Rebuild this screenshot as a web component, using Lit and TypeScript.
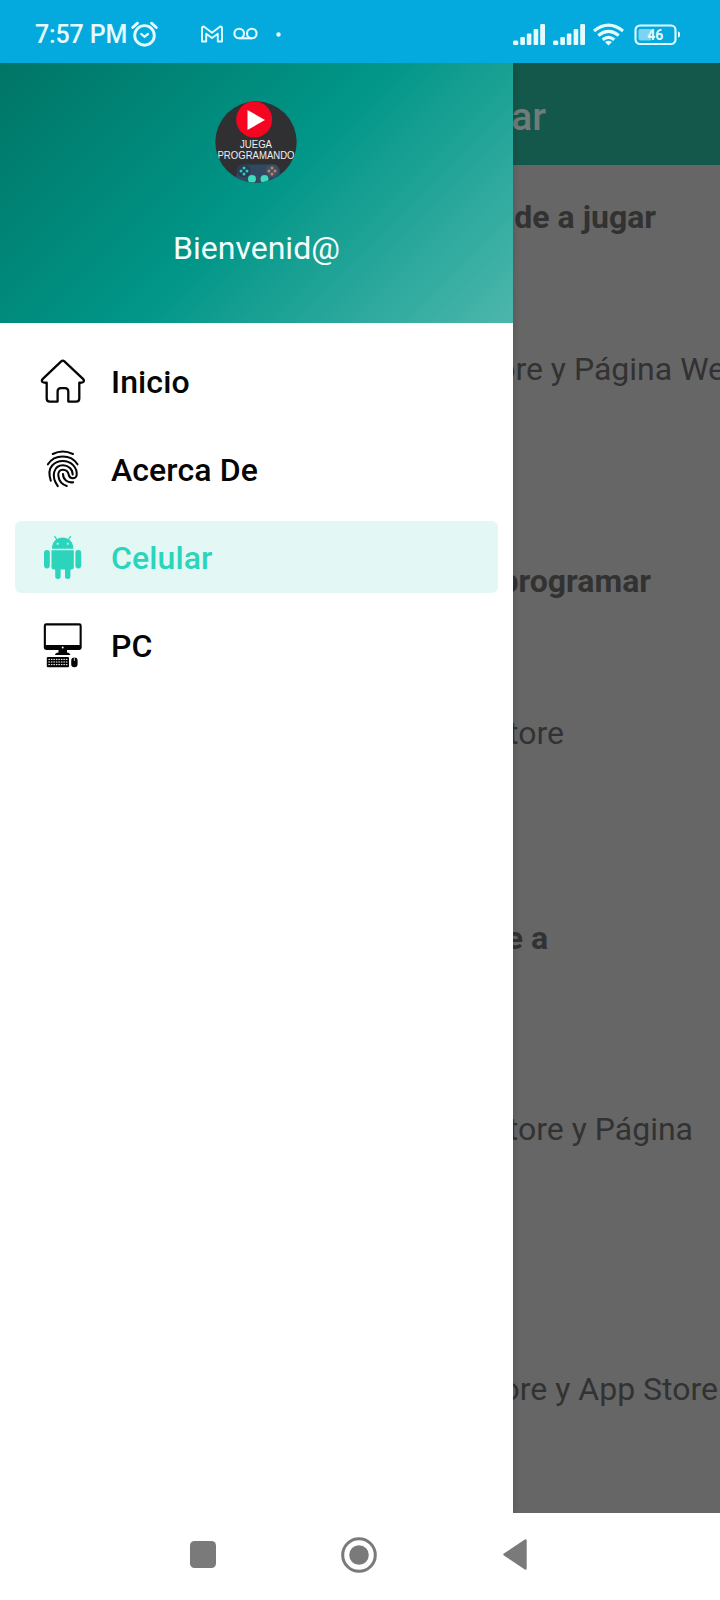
import { LitElement, html, css, svg } from "lit";
import { customElement } from "lit/decorators.js";

const home = svg`<path d="M22.2 4.3 Q23.8 2.9 25.4 4.3 L44 21.800 Q45.600 23.600 44.300 25 Q43.400 25.900 40.300 25.700 V41.500 Q40.300 44.600 37.200 44.600 H29.300 V34.500 Q29.300 31.100 25.900 31.100 H22 Q18.600 31.100 18.600 34.500 V44.600 H10.800 Q7.700 44.600 7.700 41.500 V25.700 Q4.400 25.900 3.500 25 Q2.200 23.600 3.800 21.800 Z" fill="none" stroke="currentColor" stroke-width="2.300" stroke-linejoin="round"/>`;

const fingerprint = svg`<g fill="none" stroke="currentColor" stroke-width="2.050" stroke-linecap="round">
  <path d="M13.800 9 Q23.800 4 33.900 9"/>
  <path d="M8.900 19.300 C15.500 8.800 32 8.800 38.500 19.300"/>
  <path d="M11.800 35.800 C9.600 29 9.900 24 13.200 20.500 C18.800 14.600 28.800 14.600 34.300 20.400 C37.200 23.500 38 27 37.700 30 C37.200 34.300 30.600 34.400 29.800 30 C29.300 27 27.300 24.700 23.800 24.700 C20.500 24.700 18.900 27.500 19.300 30.700 C20 36.500 23 39.600 27.800 41"/>
  <path d="M18.800 41.200 C15.500 36.500 14.100 31 15.200 27 C16.600 22.500 20 20.300 24 20.300 C29 20.300 33.600 24 33.700 29.600"/>
  <path d="M24 29 C24 34.500 28.500 38.200 34.200 37.200"/>
</g>`;

const android = svg`<g fill="currentColor">
  <path d="M13 15.700 C13 10.500 15.300 7.600 18 6 H29.300 C32 7.600 34.300 10.500 34.300 15.700 Z"/>
  <path d="M15.800 3.600 L18.500 7.500 M31.500 3.600 L28.800 7.500" stroke="currentColor" stroke-width="1.300" stroke-linecap="round"/>
  <path d="M17 6.800 Q23.700 2.300 30.300 6.800 Z"/>
  <path d="M12.500 17.300 H34.800 V34 Q34.800 36.500 32.300 36.500 H31.400 V43.500 Q31.400 46 28.700 46 Q26 46 26 43.500 V36.500 H21.600 V43.500 Q21.600 46 18.900 46 Q16.200 46 16.200 43.500 V36.500 H15 Q12.500 36.500 12.500 34 Z"/>
  <rect x="5" y="17" width="5.800" height="18.400" rx="2.800"/>
  <rect x="36.400" y="17" width="5.800" height="18.400" rx="2.800"/>
  <circle cx="18.600" cy="10.700" r="1" fill="#e3f8f5"/><circle cx="28.700" cy="10.700" r="1" fill="#e3f8f5"/>
</g>`;

const computer = svg`<g fill="currentColor">
  <path fill-rule="evenodd" d="M7.200 2.300 H40.300 Q42.700 2.300 42.700 4.700 V26.600 Q42.700 29 40.300 29 H7.200 Q4.800 29 4.800 26.600 V4.700 Q4.800 2.300 7.200 2.300 Z M6.900 4.400 V24 H40.600 V4.400 Z"/>
  <circle cx="23.700" cy="26.400" r="1" fill="#fff"/>
  <path d="M19.500 29 H28 V31.500 Q31.300 32 31.300 34 H16 Q16 32 19.500 31.500 Z"/>
  <rect x="7.800" y="35.900" width="22.200" height="10.300" rx="1"/>
  <path d="M9.400 38.400 H28.600 M9.400 41 H28.600 M9.400 43.600 H28.600" stroke="#fff" stroke-width="1" stroke-dasharray="1.500 1"/>
  <rect x="32.200" y="36.500" width="6.400" height="9.700" rx="3.200"/>
  <path d="M35.400 36.500 V40" stroke="#fff" stroke-width=".7"/>
</g>`;

const bars = html`<svg class="signal" width="32" height="22" viewBox="0 0 32 22">
  <g fill="currentColor">
    <rect x="0" y="16.500" width="5.300" height="4.500" rx="1.500"/><rect x="7.300" y="13" width="4.600" height="8" rx="1"/>
    <rect x="13.800" y="9.500" width="4.600" height="11.500" rx="1"/><rect x="20.600" y="5" width="4.600" height="16" rx="1"/>
    <rect x="27.200" y="0" width="4.800" height="21" rx="1"/>
  </g></svg>`;

@customElement("status-bar")
class StatusBar extends LitElement {
  static styles = css`
    :host { display: flex; align-items: center; box-sizing: border-box; height: 63px; padding: 6px 39px 0 35px;
      background: #04aade; color: #e4fbff; font: 500 25px/30px Roboto, sans-serif; }
    svg { display: block; flex: none; overflow: visible; }
    .time { width: 95px; white-space: nowrap; letter-spacing: -.15px; }
    .gmail { margin-left: 43px; }
    .voice { margin-left: 10px; }
    .dot { margin-left: 18px; }
    .right { display: flex; align-items: center; gap: 8px; margin-left: auto; }
    .battery { margin-left: 2px; }
    .level { font: 700 14px Roboto, sans-serif; }
  `;
  render() {
    return html`
      <span class="time">7:57 PM</span>
      <svg width="28" height="26" viewBox="0 0 28 26" fill="none" stroke="currentColor" stroke-width="2.900" stroke-linecap="round">
        <circle cx="14.500" cy="13.400" r="9.800"/><path d="M2.700 5.500 L7.500 1.200 M21.500 1.200 L26.300 5.500"/><path d="M11.300 12 L14.500 14.800 L18 12" stroke-width="2.300"/>
      </svg>
      <svg class="gmail" width="22" height="17" viewBox="0 0 22 17" fill="none" stroke="currentColor" stroke-width="1.900" stroke-linejoin="round">
        <path d="M1 15.500 V2.100 Q1 .5 2.800 .5 L11 6.800 L19.200 .5 Q21 .5 21 2.100 V15.500 H16.800 V7.800 L11 12 L5.200 7.800 V15.500 Z"/>
      </svg>
      <svg class="voice" width="25" height="13" viewBox="0 0 25 13" fill="none" stroke="currentColor" stroke-width="2.100">
        <circle cx="6.200" cy="5.500" r="4.800"/><circle cx="18.800" cy="5.500" r="4.800"/><path d="M6.200 10.300 H18.800"/>
      </svg>
      <svg class="dot" width="5" height="5"><circle cx="2.500" cy="2.500" r="2.200" fill="currentColor"/></svg>
      <div class="right">
        ${bars}${bars}
        <svg width="31" height="22" viewBox="0 0 31 22" fill="none" stroke="currentColor" stroke-width="3.100">
          <path d="M1 7 Q15.500 -4.900 30 7"/><path d="M5.300 11.500 Q15.500 3.300 25.700 11.500"/><path d="M9.700 15.700 Q15.500 10.900 21.300 15.700"/>
          <path d="M12 18 Q15.500 15.300 19 18 L15.500 21.500 Z" fill="currentColor" stroke="none"/>
        </svg>
        <svg class="battery" width="47" height="20" viewBox="0 0 47 20">
          <rect x="1.500" y=".5" width="40" height="18.500" rx="4.500" fill="none" stroke="currentColor" stroke-width="2.100"/>
          <path d="M6.500 4 H17 V15.500 H6.500 Q4.500 15.500 4.500 13.500 V6 Q4.500 4 6.500 4 Z" fill="#7dd3f2"/>
          <path d="M44 6.500 Q46 6.500 46 8.500 V10.500 Q46 12.500 44 12.500 Z" fill="currentColor"/>
          <text class="level" x="21.300" y="14.800" text-anchor="middle" fill="currentColor">46</text>
        </svg>
      </div>`;
  }
}

@customElement("nav-drawer")
class NavDrawer extends LitElement {
  static styles = css`
    :host { display: block; background: #fff; font-family: Roboto, sans-serif; }
    svg { display: block; flex: none; }
    .header { display: flex; flex-direction: column; align-items: center; box-sizing: border-box; height: 260px; padding-top: 38px;
      background: linear-gradient(135deg, #007566 0%, #009688 50%, #4db6ac 100%); }
    .avatar { margin-right: 1px; }
    .logo { font: 10.700px "Liberation Sans", Arial, sans-serif; }
    .hello { margin-top: 45px; font-size: 32px; line-height: 40px; color: #f2fffd; }
    .menu { display: flex; flex-direction: column; gap: 16px; padding: 22px 15px; }
    .item { display: flex; align-items: center; gap: 24px; height: 72px; padding-left: 24px; border-radius: 6px;
      color: #050505; font-size: 32px; font-weight: 500; letter-spacing: .1px; }
    .label { padding-top: 2px; }
    .active { color: #2bd4bb; background: #e3f8f5; }
  `;
  private items = [
    { label: "Inicio", icon: home },
    { label: "Acerca De", icon: fingerprint },
    { label: "Celular", icon: android, active: true },
    { label: "PC", icon: computer },
  ];
  render() {
    return html`
      <div class="header">
        <svg class="avatar" width="82" height="82" viewBox="0 0 82 82">
          <defs><clipPath id="round"><circle cx="41" cy="41" r="40.700"/></clipPath></defs>
          <g clip-path="url(#round)">
            <rect width="82" height="82" fill="#303033"/>
            <circle cx="39.200" cy="18.500" r="18" fill="#f5051f"/>
            <path d="M32.500 9 L50 19 L32.500 29 Z" fill="#fff"/>
            <text class="logo" x="41" y="46.800" text-anchor="middle" textLength="32" lengthAdjust="spacingAndGlyphs" fill="#eee">JUEGA</text>
            <text class="logo" x="41" y="58" text-anchor="middle" textLength="77" lengthAdjust="spacingAndGlyphs" fill="#eee">PROGRAMANDO</text>
            <path d="M28 63.500 H59 Q65 63.500 65 71.500 L67 84 H20 L22 71.500 Q22 63.500 28 63.500 Z" fill="#304860"/>
            <circle cx="29" cy="70" r="6.500" fill="#273c51"/><circle cx="57" cy="70" r="6.500" fill="#3f5063"/>
            <g fill="#37c8c4"><circle cx="29" cy="67" r="1.500"/><circle cx="29" cy="73" r="1.500"/><circle cx="26" cy="70" r="1.500"/><circle cx="32" cy="70" r="1.500"/></g>
            <g fill="#c1826b"><circle cx="57" cy="67" r="1.500"/><circle cx="57" cy="73" r="1.500"/><circle cx="54" cy="70" r="1.500"/><circle cx="60" cy="70" r="1.500"/></g>
            <circle cx="37" cy="78" r="4" fill="#3edbc0"/><circle cx="49.500" cy="78" r="4" fill="#3edbc0"/>
          </g>
        </svg>
        <div class="hello">Bienvenid@</div>
      </div>
      <nav class="menu">
        ${this.items.map(i => html`<div class="item ${i.active ? "active" : ""}">
          <svg width="48" height="48" viewBox="0 0 48 48">${i.icon}</svg><span class="label">${i.label}</span></div>`)}
      </nav>`;
  }
}

@customElement("dimmed-page")
class DimmedPage extends LitElement {
  static styles = css`
    :host { display: flex; flex-direction: column; min-width: 0; overflow: hidden; background: #666; color: #323232;
      font: 32px/40px Roboto, sans-serif; }
    .toolbar { display: flex; flex: none; justify-content: flex-end; box-sizing: border-box; height: 102px; padding: 34px 174px 0 0;
      background: #14574b; color: #737b79; font-size: 39px; font-weight: 500; }
    .row { display: flex; flex: none; justify-content: flex-end; height: 40px; white-space: nowrap; }
    .bold { font-weight: 700; font-size: 32px; }
    .a { margin: 32px 64px 0 0; }
    .b { margin: 112px -5px 0 0; }
    .c { margin: 172px 69px 0 0; }
    .d { margin: 112px 156px 0 0; }
    .e { margin: 165px 172px 0 0; }
    .f { margin: 151px 27px 0 0; }
    .g { margin: 220px 2px 0 0; }
  `;
  render() {
    return html`
      <div class="toolbar">ar</div>
      <div class="row bold a"><span>de a jugar</span></div>
      <div class="row b"><span>ore y Página We</span></div>
      <div class="row bold c"><span>programar</span></div>
      <div class="row d"><span>tore</span></div>
      <div class="row bold e"><span>e a</span></div>
      <div class="row f"><span>tore y Página</span></div>
      <div class="row g"><span>ore y App Store</span></div>`;
  }
}

@customElement("app-root")
class AppRoot extends LitElement {
  static styles = css`
    :host { display: flex; flex-direction: column; width: 720px; height: 1600px; overflow: hidden; background: #fff; }
    .main { display: grid; grid-template-columns: 513px 207px; height: 1450px; overflow: hidden; }
    .drawer { z-index: 1; box-shadow: 0 0 8px rgba(0, 0, 0, .18); }
    .system { display: flex; align-items: center; height: 87px; padding: 0 193px 4px 190px; box-sizing: border-box; justify-content: space-between; }
    .home { margin-right: 2px; }
  `;
  render() {
    return html`
      <status-bar></status-bar>
      <div class="main"><nav-drawer class="drawer"></nav-drawer><dimmed-page></dimmed-page></div>
      <div class="system">
        <svg width="26" height="27"><rect width="26" height="27" rx="4.500" fill="#7a7a7a"/></svg>
        <svg class="home" width="36" height="36"><circle cx="18" cy="18" r="16.300" fill="none" stroke="#7a7a7a" stroke-width="3"/><circle cx="18" cy="18" r="9.800" fill="#7a7a7a"/></svg>
        <svg width="24" height="31" viewBox="0 0 24 31"><path d="M22.500 1.500 V29.500 L1.500 15.500 Z" fill="#7a7a7a" stroke="#7a7a7a" stroke-width="2.400" stroke-linejoin="round"/></svg>
      </div>`;
  }
}
